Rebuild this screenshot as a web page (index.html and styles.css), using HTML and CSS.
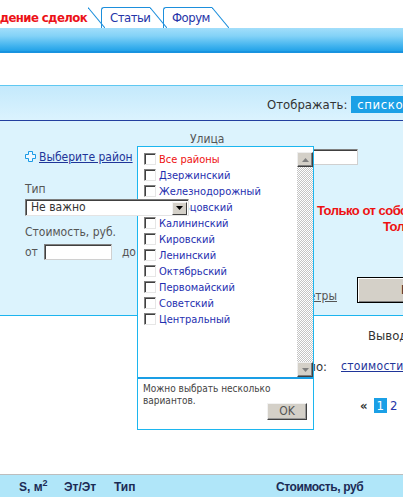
FILE: index.html
```html
<!DOCTYPE html>
<html lang="ru">
<head>
<meta charset="utf-8">
<title>Поиск</title>
<link rel="stylesheet" href="styles.css">
</head>
<body>
<div class="page">
  <div class="tabs">
    <div class="tab tab-active">
      <div class="tab-body"><span>Проведение сделок</span></div>
      <svg class="tab-edge" viewBox="0 0 17 21"><line x1="0" y1="0.5" x2="17" y2="21" stroke="#1d8fdc" stroke-width="1.1"/></svg>
    </div>
    <div class="tab">
      <div class="tab-body">Статьи</div>
      <svg class="tab-edge" viewBox="0 0 17 21"><line x1="0" y1="0.5" x2="17" y2="21" stroke="#1d8fdc" stroke-width="1.1"/></svg>
    </div>
    <div class="tab">
      <div class="tab-body">Форум</div>
      <svg class="tab-edge" viewBox="0 0 17 21"><line x1="0" y1="0.5" x2="17" y2="21" stroke="#1d8fdc" stroke-width="1.1"/></svg>
    </div>
  </div>
  <div class="topbar"></div>
  <div class="gap"></div>

  <div class="viewbar">
    <span class="view-label">Отображать:</span>
    <span class="view-btn">списком</span>
  </div>

  <div class="filters">
    <div class="col-left">
      <div class="district">
        <svg class="plus" viewBox="0 0 11 11"><polygon points="3.5,0.5 7.5,0.5 7.5,3.5 10.5,3.5 10.5,7.5 7.5,7.5 7.5,10.5 3.5,10.5 3.5,7.5 0.5,7.5 0.5,3.5 3.5,3.5" fill="#eef8ff" stroke="#1a9be6"/></svg>
        <a class="link" href="#">Выберите район</a>
      </div>
      <div class="lbl lbl-type">Тип</div>
      <div class="select">
        <span class="select-text">Не важно</span>
        <span class="select-btn"><svg viewBox="0 0 7 4" class="arr"><polygon points="0,0 7,0 3.5,4" fill="#000"/></svg></span>
      </div>
      <div class="lbl lbl-price">Стоимость, руб.</div>
      <div class="price-row">
        <span>от</span>
        <span class="input input-price"></span>
        <span class="to">до</span>
      </div>
    </div>
    <div class="col-right">
      <div class="lbl">Улица</div>
      <span class="input input-street"></span>
      <div class="only">
        <div>Только от собственников</div>
        <div class="only-2">Только с фото</div>
      </div>
      <div class="actions">
        <a class="link-gray" href="#">Расширенные параметры</a>
        <span class="btn-find">Найти</span>
      </div>
    </div>
  </div>

  <div class="results">
    <div class="per-page">Выводить по:</div>
    <div class="sort">
      <span class="sort-label">Сортировать по:</span>
      <a class="link sort-link" href="#">стоимости</a>
    </div>
    <div class="pager">
      <span class="pager-prev">«</span>
      <span class="pager-cur">1</span>
      <a class="pager-link" href="#">2</a>
    </div>
  </div>

  <div class="thead">
    <span>S, м<sup>2</sup></span>
    <span>Эт/Эт</span>
    <span>Тип</span>
    <span>Стоимость, руб</span>
  </div>

  <div class="popup">
    <div class="pop-list">
      <div class="items">
        <div class="item item-all"><span class="cb"></span>Все районы</div>
        <div class="item"><span class="cb"></span>Дзержинский</div>
        <div class="item"><span class="cb"></span>Железнодорожный</div>
        <div class="item"><span class="cb"></span>Заельцовский</div>
        <div class="item"><span class="cb"></span>Калининский</div>
        <div class="item"><span class="cb"></span>Кировский</div>
        <div class="item"><span class="cb"></span>Ленинский</div>
        <div class="item"><span class="cb"></span>Октябрьский</div>
        <div class="item"><span class="cb"></span>Первомайский</div>
        <div class="item"><span class="cb"></span>Советский</div>
        <div class="item"><span class="cb"></span>Центральный</div>
      </div>
      <div class="scrollbar">
        <span class="sb-btn"><svg viewBox="0 0 7 4" class="sb-arr"><polygon points="3.5,0 7,4 0,4" fill="#808080"/></svg></span>
        <span class="sb-track"></span>
        <span class="sb-btn"><svg viewBox="0 0 7 4" class="sb-arr"><polygon points="0,0 7,0 3.5,4" fill="#808080"/></svg></span>
      </div>
    </div>
    <div class="pop-sep"></div>
    <div class="pop-foot">
      <div class="pop-note">Можно выбрать несколько<br>вариантов.</div>
      <span class="btn-ok">OK</span>
    </div>
  </div>
</div>
</body>
</html>
```

FILE: styles.css
```css
html, body {
  margin: 0;
  padding: 0;
  overflow: hidden;
  background: #fff;
}
body {
  width: 403px;
  height: 497px;
  font-family: "DejaVu Sans Condensed", "Liberation Sans", sans-serif;
  font-size: 12px;
  color: #4a4a4a;
}
.page {
  width: 470px;
  position: relative;
}

/* tabs */
.tabs {
  display: flex;
  align-items: flex-end;
  height: 28px;
}
.tab {
  display: flex;
  height: 21px;
}
.tab + .tab {
  margin-left: -4px;
}
.tab-body {
  box-sizing: border-box;
  width: 49px;
  border-top: 1px solid #1d8fdc;
  border-left: 1px solid #1d8fdc;
  border-top-left-radius: 3px;
  padding-left: 8px;
  font-size: 13px;
  letter-spacing: -0.5px;
  line-height: 20px;
  color: #2534a8;
  white-space: nowrap;
}
.tab-active .tab-body {
  width: 88px;
  border: 0;
  padding: 0 1px 0 0;
  display: flex;
  justify-content: flex-end;
  color: #ec1218;
  font-weight: bold;
  font-size: 13px;
  letter-spacing: -0.6px;
  line-height: 21px;
}
.tab-edge {
  display: block;
  width: 17px;
  height: 21px;
}

.topbar {
  height: 23px;
  background: linear-gradient(#a2defb, #83d2f7 35%, #45b5ef 75%, #22a2e8);
  border-bottom: 2px solid #1893df;
}
.gap {
  height: 32px;
}

/* view bar */
.viewbar {
  height: 32px;
  border-top: 1px solid #5fc8f1;
  border-bottom: 1px solid #233f9f;
  background: linear-gradient(#c4e9fc, #dbf3fe);
  display: flex;
  align-items: center;
  padding-left: 267px;
  padding-top: 2px;
  box-sizing: content-box;
}
.view-label {
  font-size: 13px;
  color: #333;
  margin-right: 4px;
}
.view-btn {
  background: #1ba0e6;
  color: #fff;
  font-size: 13px;
  letter-spacing: 0.6px;
  line-height: 17px;
  padding: 0 30px 0 6px;
}

/* filters */
.filters {
  height: 194px;
  background: #dcf3fd;
  border-bottom: 1px solid #1cb4ee;
  display: grid;
  grid-template-columns: 165px 1fr;
  padding-left: 25px;
}
.col-left {
  padding-top: 29px;
  display: flex;
  flex-direction: column;
  align-items: flex-start;
}
.district {
  display: flex;
  align-items: center;
  height: 13px;
}
.plus {
  width: 11px;
  height: 11px;
  margin-right: 3px;
}
.link {
  color: #1f3599;
  text-decoration: underline;
  font-size: 12px;
}
.lbl {
  line-height: 15px;
  color: #555;
}
.lbl-type {
  margin-top: 19px;
}
.select {
  position: relative;
  z-index: 10;
  box-sizing: border-box;
  width: 164px;
  height: 17px;
  margin-top: 2px;
  background: #fff;
  border: 1px solid;
  border-color: #7c7c7c #e4e4e4 #e4e4e4 #7c7c7c;
  box-shadow: inset 1px 1px 0 #404040;
  display: flex;
  align-items: center;
  justify-content: space-between;
}
.select-text {
  padding-left: 5px;
  color: #333;
  line-height: 15px;
}
.select-btn {
  box-sizing: border-box;
  width: 15px;
  height: 13px;
  margin-right: 1px;
  margin-top: 1px;
  background: #d4d0c8;
  border: 1px solid;
  border-color: #f4f4f4 #404040 #404040 #f4f4f4;
  display: flex;
  align-items: center;
  justify-content: center;
}
.arr {
  width: 7px;
  height: 4px;
}
.lbl-price {
  margin-top: 9px;
}
.price-row {
  margin-top: 4px;
  display: flex;
  align-items: center;
  color: #555;
}
.input {
  display: block;
  box-sizing: border-box;
  height: 16px;
  background: #fff;
  border: 1px solid;
  border-color: #808080 #d0d0d0 #d0d0d0 #808080;
  box-shadow: inset 1px 1px 0 #404040;
}
.input-price {
  width: 68px;
  margin-left: 6px;
}
.to {
  margin-left: 10px;
}
.col-right {
  padding-top: 11px;
  display: flex;
  flex-direction: column;
  align-items: flex-start;
}
.input-street {
  width: 168px;
  margin-top: 2px;
}
.only {
  margin-top: 38px;
  padding-left: 127px;
  font-family: "Liberation Sans Narrow", "Liberation Sans", sans-serif;
  font-weight: bold;
  font-size: 13px;
  letter-spacing: -0.5px;
  line-height: 16px;
  color: #ee1111;
  white-space: nowrap;
}
.only-2 {
  padding-left: 66px;
}
.actions {
  margin-top: 42px;
  display: grid;
  grid-template-columns: 147px auto;
  column-gap: 20px;
  align-items: end;
}
.link-gray {
  justify-self: end;
  color: #555;
  text-decoration: underline;
  white-space: nowrap;
  line-height: 14px;
}
.btn-find {
  box-sizing: border-box;
  height: 26px;
  padding: 0 30px 0 43px;
  background: #d4d0c8;
  border: 1px solid #000;
  box-shadow: inset 1px 1px 0 #fff, inset -1px -1px 0 #808080;
  font-size: 13px;
  font-weight: bold;
  color: #333;
  line-height: 24px;
}

/* results */
.results {
  height: 158px;
  display: flex;
  flex-direction: column;
  align-items: flex-start;
  color: #333;
}
.per-page {
  margin-top: 12px;
  padding-left: 368px;
  font-size: 13px;
  line-height: 15px;
  white-space: nowrap;
}
.sort {
  margin-top: 16px;
  display: flex;
  align-items: center;
  line-height: 15px;
}
.sort-label {
  width: 200px;
  margin-left: 127px;
  text-align: right;
  font-size: 13px;
}
.sort-link {
  margin-left: 14px;
  font-size: 12px;
  letter-spacing: 0.3px;
}
.pager {
  margin-top: 24px;
  padding-left: 360px;
  display: flex;
  align-items: center;
  font-size: 13px;
  line-height: 15px;
}
.pager-prev {
  font-weight: bold;
  color: #333;
  margin-right: 6px;
}
.pager-cur {
  background: #1ba0e6;
  color: #fff;
  padding: 0 3px;
  margin-right: 3px;
}
.pager-link {
  color: #2536a8;
  text-decoration: none;
}

/* table header */
.thead {
  height: 24px;
  border-top: 1px solid #bdbdbd;
  background: #b0e6f9;
  display: grid;
  grid-template-columns: 45px 50px 162px auto;
  padding-left: 19px;
  font-family: "Liberation Sans", sans-serif;
  font-weight: bold;
  font-size: 12px;
  line-height: 24px;
  color: #1b2b55;
  white-space: nowrap;
}
.thead span:last-child {
  letter-spacing: -0.4px;
}
.thead sup {
  font-size: 9px;
  line-height: 0;
}

/* district popup */
.popup {
  position: absolute;
  left: 137px;
  top: 146px;
  z-index: 5;
  width: 175px;
  height: 282px;
  border: 1px solid #1cb6ef;
  background: #fff;
  display: flex;
  flex-direction: column;
}
.pop-list {
  height: 225px;
  padding: 5px 0 0 5px;
  display: flex;
}
.items {
  flex: 1;
  display: flex;
  flex-direction: column;
}
.item {
  height: 16px;
  display: flex;
  align-items: flex-start;
  font-size: 11px;
  line-height: 16px;
  color: #1f2fb0;
  white-space: nowrap;
}
.item-all {
  color: #ee1111;
}
.cb {
  box-sizing: border-box;
  width: 12px;
  height: 12px;
  margin: 1px 3px 0 1px;
  background: #fff;
  border: 1px solid;
  border-color: #808080 #e6e6e6 #e6e6e6 #808080;
  box-shadow: inset 1px 1px 0 #404040;
  flex: none;
}
.scrollbar {
  width: 16px;
  display: flex;
  flex-direction: column;
}
.sb-btn {
  box-sizing: border-box;
  height: 15px;
  background: #d4d0c8;
  border: 1px solid;
  border-color: #eeeeee #404040 #404040 #eeeeee;
  box-shadow: inset -1px -1px 0 #808080;
  display: flex;
  align-items: center;
  justify-content: center;
}
.sb-arr {
  width: 7px;
  height: 4px;
}
.sb-track {
  flex: 1;
  background: repeating-conic-gradient(#c4c4c4 0 25%, #ffffff 0 50%) 0 0 / 2px 2px;
}
.pop-sep {
  height: 2px;
  background: #1a9ee5;
}
.pop-foot {
  flex: 1;
  padding: 4px 6px 0 5px;
  display: flex;
  flex-direction: column;
}
.pop-note {
  font-size: 10px;
  line-height: 12px;
  color: #444;
}
.btn-ok {
  align-self: flex-end;
  box-sizing: border-box;
  width: 40px;
  height: 17px;
  margin-top: -4px;
  background: #d4d0c8;
  border: 1px solid;
  border-color: #f2f2f2 #404040 #404040 #f2f2f2;
  box-shadow: inset -1px -1px 0 #9a9a9a;
  text-align: center;
  font-size: 12px;
  line-height: 15px;
  color: #555;
}
```
